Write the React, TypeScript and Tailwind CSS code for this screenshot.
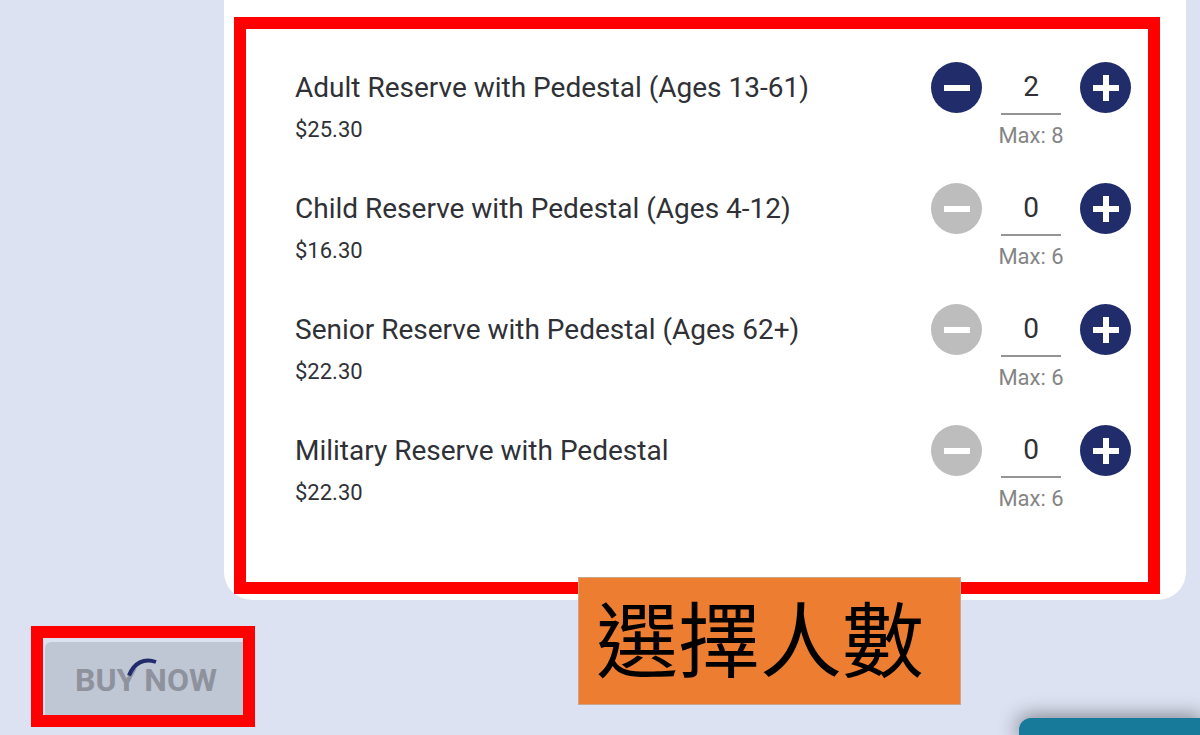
import { useState } from 'react'

type Ticket = {
  id: string
  name: string
  price: string
  max: number
  initial: number
}

const tickets: Ticket[] = [
  { id: 'adult', name: 'Adult Reserve with Pedestal (Ages 13-61)', price: '$25.30', max: 8, initial: 2 },
  { id: 'child', name: 'Child Reserve with Pedestal (Ages 4-12)', price: '$16.30', max: 6, initial: 0 },
  { id: 'senior', name: 'Senior Reserve with Pedestal (Ages 62+)', price: '$22.30', max: 6, initial: 0 },
  { id: 'military', name: 'Military Reserve with Pedestal', price: '$22.30', max: 6, initial: 0 },
]

const stepClass =
  'flex h-[51px] w-[51px] shrink-0 items-center justify-center rounded-full bg-[#212d6b] text-white disabled:bg-[#bdbdbd]'

function TicketRow({ ticket }: { ticket: Ticket }) {
  const [count, setCount] = useState(ticket.initial)

  return (
    <li className="flex items-start justify-between gap-4">
      <div className="text-[#2f3136]">
        <label htmlFor={ticket.id} className="block text-[28px] leading-[51px]">
          {ticket.name}
        </label>
        <p className="text-[22px] leading-[34px]">{ticket.price}</p>
      </div>

      <div className="flex items-start gap-4">
        <button
          type="button"
          aria-label="Remove one"
          disabled={count === 0}
          onClick={() => setCount(count - 1)}
          className={stepClass}
        >
          <svg viewBox="0 0 26 26" className="h-[26px] w-[26px]" fill="currentColor">
            <rect x="0" y="10" width="26" height="6" />
          </svg>
        </button>
        <div className="flex w-[66px] flex-col items-center">
          <input
            id={ticket.id}
            type="text"
            inputMode="numeric"
            value={count}
            onChange={(e) => setCount(Math.min(ticket.max, Number(e.target.value) || 0))}
            className="h-[53px] w-[60px] border-b-2 border-[#949494] bg-transparent pb-0.5 text-center text-[28px] text-[#2f3136] outline-none"
          />
          <span className="text-[22px] leading-[42px] whitespace-nowrap text-[#858585]">
            Max: {ticket.max}
          </span>
        </div>
        <button
          type="button"
          aria-label="Add one"
          disabled={count === ticket.max}
          onClick={() => setCount(count + 1)}
          className={stepClass}
        >
          <svg viewBox="0 0 26 26" className="h-[26px] w-[26px]" fill="currentColor">
            <path d="M10 0h6v10h10v6H16v10h-6V16H0v-6h10z" />
          </svg>
        </button>
      </div>
    </li>
  )
}

export default function App() {
  return (
    <main className="relative min-h-screen overflow-hidden bg-[#dce2f2] font-['Roboto',sans-serif]">
      <section className="relative mr-[14px] ml-[224px] rounded-b-[28px] bg-white pt-[17px] pr-[26px] pb-[6px] pl-[10px]">
        <ul className="flex flex-col gap-[26px] border-12 border-[#ff0000] pt-[33px] pr-[17px] pb-[62px] pl-[49px]">
          {tickets.map((ticket) => (
            <TicketRow key={ticket.id} ticket={ticket} />
          ))}
        </ul>

        {/* Callout label hanging over the card's bottom edge */}
        <div className="absolute right-[225px] -bottom-[105px] border border-[#c9a58c] bg-[#ed7d31] pr-[36px] pb-[10px] pl-[17px] font-['DFKai-SB','BiauKai','Noto_Sans_CJK_TC',sans-serif] text-[82px] leading-[116px] whitespace-nowrap text-black">
          選擇人數
        </div>
      </section>

      <div className="mt-[26px] ml-[31px] w-fit border-12 border-[#ff0000] pt-1 pl-0.5">
        <button
          type="button"
          disabled
          className="relative block h-[73px] w-[198px] rounded-tl-md bg-[#bfc6d4] pt-0.5 pl-1 text-[32px] font-bold text-[#8e929d]"
        >
          BUY NOW
          {/* Loading arc */}
          <svg viewBox="0 0 60 60" className="absolute top-[15px] left-[72px] h-[60px] w-[60px]" fill="none">
            <path d="M12 18.5C17 6 27 0.5 39 5" stroke="#212d6b" strokeWidth="4" />
          </svg>
        </button>
      </div>

      {/* Collapsed chat panel */}
      <aside className="absolute right-0 bottom-0 h-[17px] w-[181px] rounded-tl-xl bg-[#187a9b] shadow-[0_0_20px_2px_rgba(0,0,0,0.45)]" />
    </main>
  )
}
